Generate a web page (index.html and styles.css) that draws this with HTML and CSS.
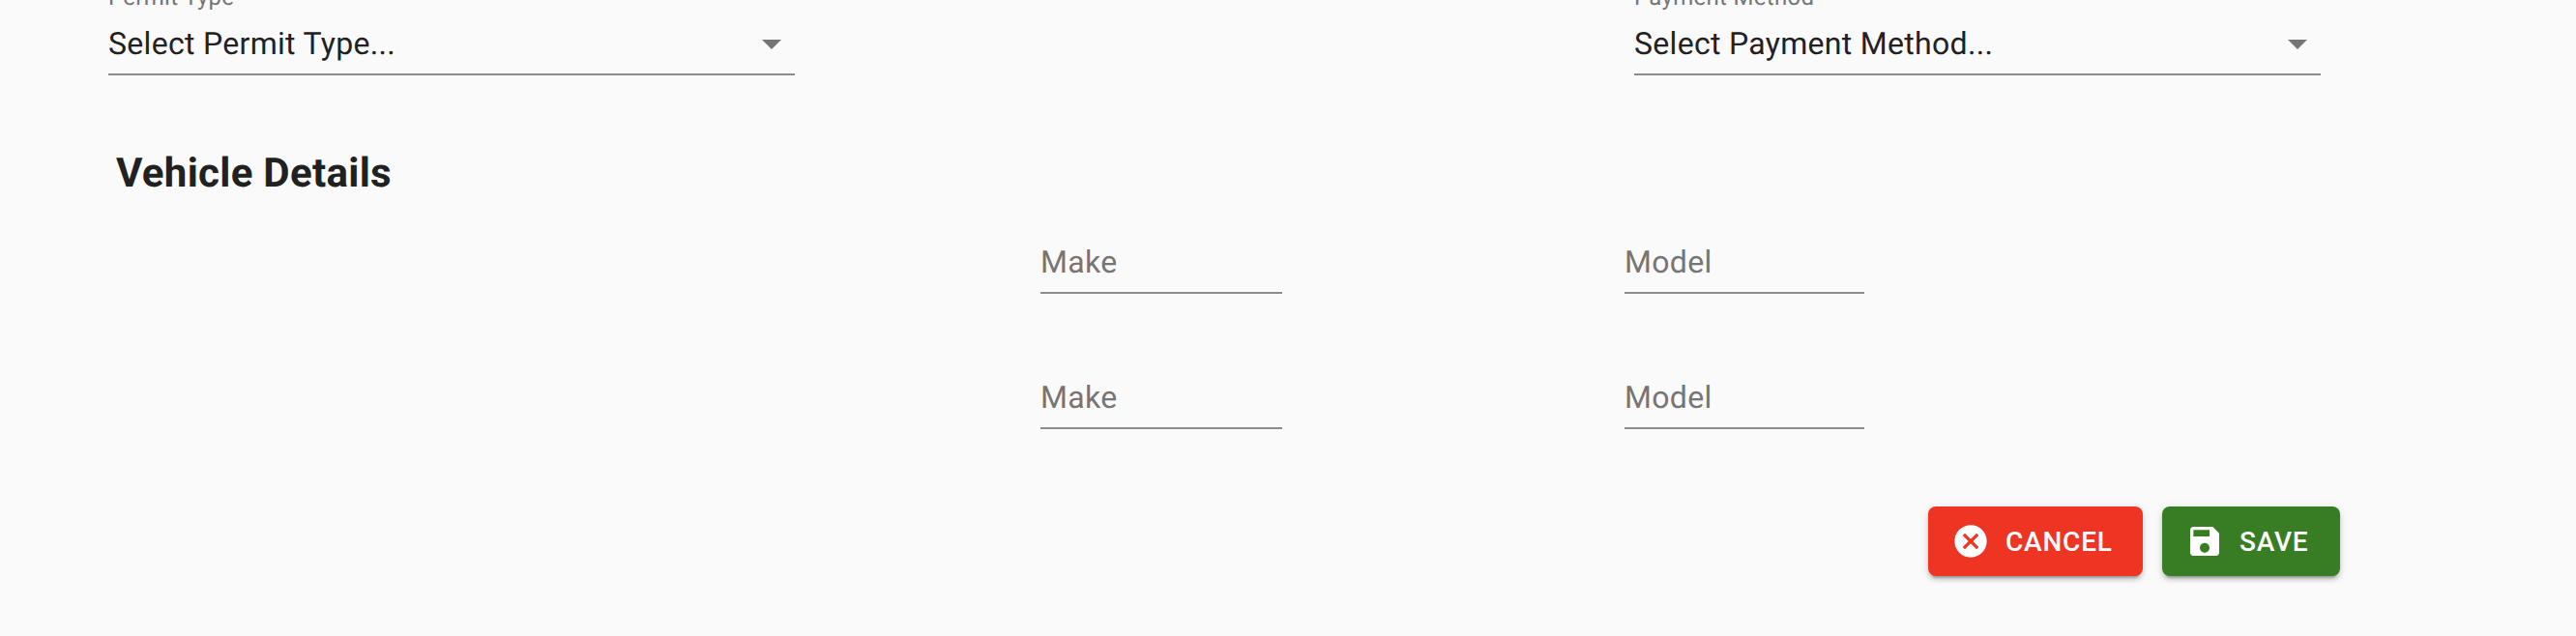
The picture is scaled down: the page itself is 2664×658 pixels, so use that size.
FILE: index.html
```html
<!DOCTYPE html>
<html lang="en">
<head>
  <meta charset="UTF-8">
  <title>Vehicle Permit</title>
  <link rel="stylesheet" href="styles.css">
</head>
<body>
  <form class="permit-form">
    <div class="select-row">
      <div class="field">
        <div class="field-label">Permit Type</div>
        <div class="select-box">
          <span>Select Permit Type...</span>
          <svg class="arrow" viewBox="0 0 24 24"><path d="M7 10l5 5 5-5z"/></svg>
        </div>
      </div>
      <div class="field">
        <div class="field-label">Payment Method</div>
        <div class="select-box">
          <span>Select Payment Method...</span>
          <svg class="arrow" viewBox="0 0 24 24"><path d="M7 10l5 5 5-5z"/></svg>
        </div>
      </div>
    </div>

    <h2 class="section-title">Vehicle Details</h2>

    <div class="vehicle-grid">
      <div class="text-input">Make</div>
      <div class="text-input">Model</div>
      <div class="text-input">Make</div>
      <div class="text-input">Model</div>
    </div>

    <div class="actions">
      <button type="button" class="btn btn-cancel">
        <svg class="btn-icon" viewBox="0 0 24 24"><path d="M12 2C6.47 2 2 6.47 2 12s4.47 10 10 10 10-4.47 10-10S17.53 2 12 2zm5 13.59L15.59 17 12 13.41 8.41 17 7 15.59 10.59 12 7 8.41 8.41 7 12 10.59 15.59 7 17 8.41 13.41 12 17 15.59z"/></svg>
        Cancel
      </button>
      <button type="button" class="btn btn-save">
        <svg class="btn-icon" viewBox="0 0 24 24"><path d="M17 3H5c-1.11 0-2 .9-2 2v14c0 1.1.89 2 2 2h14c1.1 0 2-.9 2-2V7l-4-4zm-5 16c-1.66 0-3-1.34-3-3s1.34-3 3-3 3 1.34 3 3-1.34 3-3 3zm3-10H5V5h10v4z"/></svg>
        Save
      </button>
    </div>
  </form>
</body>
</html>
```

FILE: styles.css
```css
html, body {
  margin: 0;
  height: 100%;
  overflow: hidden;
}
body {
  background: #fafafa;
  font-family: Roboto, "Liberation Sans", sans-serif;
  color: #212121;
  text-rendering: geometricPrecision;
}
.permit-form {
  margin-top: -19px;
  padding: 0 244px 0 112px;
}
.select-row {
  display: flex;
  justify-content: space-between;
  padding-right: 20px;
}
.field {
  width: 710px;
}
.field-label {
  font-size: 24px;
  line-height: 32px;
  margin-bottom: 13px;
  letter-spacing: 0.3px;
  color: #757575;
}
.select-box {
  display: flex;
  justify-content: space-between;
  align-items: center;
  height: 38px;
  padding-bottom: 12px;
  border-bottom: 2px solid #8c8c8c;
  font-size: 32px;
  line-height: 38px;
  letter-spacing: 0.3px;
}
.arrow {
  width: 48px;
  height: 48px;
  fill: #757575;
}
.section-title {
  margin: 77px 0 47px 8px;
  font-size: 42px;
  line-height: 50px;
  font-weight: 700;
  letter-spacing: 0.3px;
}
.vehicle-grid {
  display: grid;
  grid-template-columns: 250px 248px;
  column-gap: 354px;
  row-gap: 88px;
  margin-left: 964px;
}
.text-input {
  height: 38px;
  padding-bottom: 12px;
  border-bottom: 2px solid #8c8c8c;
  font-size: 32px;
  line-height: 38px;
  letter-spacing: 0.3px;
  color: #757575;
}
.actions {
  display: flex;
  justify-content: flex-end;
  gap: 20px;
  margin-top: 80px;
}
.btn {
  display: flex;
  align-items: center;
  box-sizing: border-box;
  height: 72px;
  padding: 0 0 0 24px;
  border: none;
  border-radius: 8px;
  color: white;
  font-family: inherit;
  font-size: 28px;
  font-weight: 500;
  letter-spacing: 0.8px;
  text-transform: uppercase;
  box-shadow: 0 6px 2px -4px rgba(0,0,0,0.2), 0 4px 4px 0 rgba(0,0,0,0.14), 0 2px 10px 0 rgba(0,0,0,0.12);
}
.btn-cancel {
  width: 222px;
  background: #ee3524;
}
.btn-save {
  width: 184px;
  background: #387c24;
}
.btn-icon {
  width: 40px;
  height: 40px;
  margin-right: 16px;
  fill: white;
}
```
